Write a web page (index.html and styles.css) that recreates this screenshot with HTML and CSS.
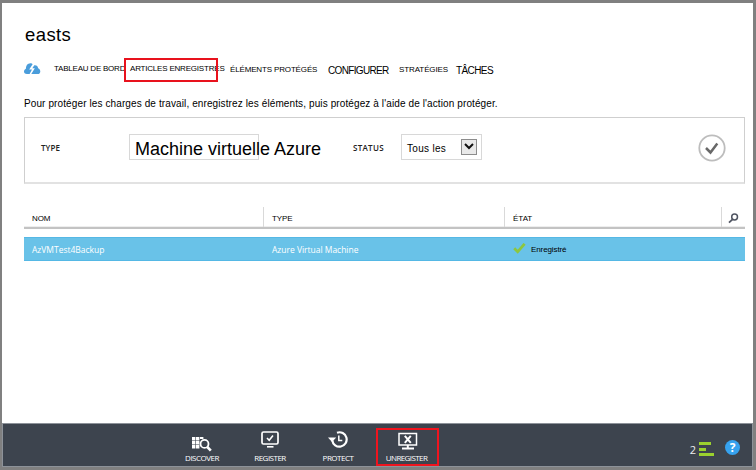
FILE: index.html
```html
<!DOCTYPE html>
<html lang="fr">
<head>
<meta charset="utf-8">
<title>easts</title>
<link rel="stylesheet" href="styles.css">
</head>
<body>
<div class="window">
  <main class="content">
    <h1 class="title">easts</h1>
    <nav class="tabs">
      <svg class="cloud" width="17" height="12" viewBox="0 0 17 12"><path fill="#4a9ddb" d="M3 11C.8 11 0 9.900 0 8.600C0 7.200.7 6.300 1.800 6C1.900 2.600 3.400.4 6.400.3c1.100 0 1.700.3 2.200.9L5.200 6.500H8L5.600 11Z"/><path fill="#4a9ddb" d="M7.300 11L10.800 5.300H8.300L10.300 2.200c2.200-.3 3.600 1 3.800 3C15.500 5.700 16.300 7 16.300 8.400c0 1.600-1.200 2.600-2.600 2.600Z"/></svg>
      <a class="tab t-board">TABLEAU DE BORD</a>
      <a class="tab t-items">ARTICLES ENREGISTRÉS</a>
      <a class="tab t-protected">ÉLÉMENTS PROTÉGÉS</a>
      <a class="tab t-config">CONFIGURER</a>
      <a class="tab t-policies">STRATÉGIES</a>
      <a class="tab t-jobs">TÂCHES</a>
    </nav>
    <p class="intro">Pour protéger les charges de travail, enregistrez les éléments, puis protégez à l'aide de l'action protéger.</p>
    <section class="filters">
      <span class="label l-type">TYPE</span>
      <div class="field f-type"><span class="big">Machine virtuelle Azure</span></div>
      <span class="label l-status">STATUS</span>
      <div class="field f-status"><span class="all">Tous les</span><span class="arrow"><svg width="10" height="7" viewBox="0 0 10 7"><path d="M1 1l4 4 4-4" fill="none" stroke="#111" stroke-width="2"/></svg></span></div>
      <svg class="apply" width="28" height="28" viewBox="0 0 28 28"><circle cx="14" cy="14" r="12.700" fill="#fff" stroke="#bdbdbd" stroke-width="1.800"/><path d="M8 14l4.500 4.500 6.800-8.900" fill="none" stroke="#686868" stroke-width="2.500"/></svg>
    </section>
    <div class="thead">
      <div class="th c1"><span class="h-name">NOM</span></div>
      <div class="th c2"><span class="h-type">TYPE</span></div>
      <div class="th c3"><span class="h-state">ÉTAT</span></div>
      <div class="th c4"><svg width="11" height="11" viewBox="0 0 11 11"><circle cx="6.600" cy="4" r="2.900" fill="none" stroke="#505562" stroke-width="1.500"/><path d="M4.500 6.300L1 9.600" stroke="#505562" stroke-width="1.800"/></svg></div>
    </div>
    <div class="row">
      <div class="td c1"><span class="v-name">AzVMTest4Backup</span></div>
      <div class="td c2"><span class="v-type">Azure Virtual Machine</span></div>
      <div class="td c3"><svg class="ok" width="13" height="11" viewBox="0 0 13 11"><path d="M1.200 5.300l3.500 3.500L11.600.8" fill="none" stroke="#8dc63f" stroke-width="2.800"/></svg><span class="v-state">Enregistré</span></div>
    </div>
  </main>
  <footer class="bar">
    <div class="cmds">
      <div class="cmd k1">
        <svg width="22" height="18" viewBox="0 0 22 18"><path fill="#fff" d="M1 2h3.400v3.400H1zM5 2h3.400v3.400H5zM9 2h3.400v2H9zM1 6h3.400v3.400H1zM5 6h3.400v3.400H5zM1 10h3.400v3.400H1zM5 10h3.400v3.400H5z"/><circle cx="13.500" cy="8.900" r="4" fill="#3d444e" stroke="#fff" stroke-width="1.800"/><path d="M16.300 12l3.500 3.700" stroke="#fff" stroke-width="2.600"/></svg>
        <span class="n1">DISCOVER</span>
      </div>
      <div class="cmd k2">
        <svg width="18" height="18" viewBox="0 0 18 18"><rect x="1" y="1" width="16" height="12" rx="1.500" fill="none" stroke="#fff" stroke-width="1.700"/><path d="M6 7l2.200 2.200L12 4.500" fill="none" stroke="#fff" stroke-width="1.600"/><path d="M6 15.800h6.500" stroke="#fff" stroke-width="1.600"/></svg>
        <span class="n2">REGISTER</span>
      </div>
      <div class="cmd k3">
        <svg width="20" height="18" viewBox="0 0 20 18"><path d="M4.300 9.300A7.200 7.200 0 1 0 9 1.700" fill="none" stroke="#fff" stroke-width="2.200"/><path d="M0 6.500h8.200L4 11z" fill="#fff"/><path d="M10.800 4.500v5h3.500" fill="none" stroke="#fff" stroke-width="1.500"/></svg>
        <span class="n3">PROTECT</span>
      </div>
      <div class="cmd k4">
        <svg width="20" height="18" viewBox="0 0 20 18"><rect x="1" y="1.500" width="17.500" height="11.500" fill="none" stroke="#fff" stroke-width="1.500"/><path d="M6.800 3.800l6 7M12.800 3.800l-6 7" stroke="#fff" stroke-width="2"/><path d="M9.800 13v3M4 16.500h12" stroke="#fff" stroke-width="2"/></svg>
        <span class="n4">UNREGISTER</span>
      </div>
    </div>
    <div class="status">
      <span class="count">2</span>
      <svg width="15" height="15" viewBox="0 0 15 15"><path fill="#9bd12f" d="M0 0h12v3H0zM0 6h7v3H0zM0 11h15v3H0z"/></svg>
      <span class="help">?</span>
    </div>
  </footer>
</div>
</body>
</html>
```
FILE: styles.css
```css
*, *::after { box-sizing: border-box; }
body {
  margin: 0;
  width: 756px;
  height: 470px;
  background: #808080;
  font-family: "Liberation Sans", Arial, sans-serif;
  color: #000;
  overflow: hidden;
  white-space: nowrap;
}
.window {
  width: 751px;
  height: 464px;
  margin: 3px 3px 3px 2px;
  background: #fff;
  display: flex;
  flex-direction: column;
  float: left;
}
.content { flex: 1; padding: 0 8px 0 22px; }
.title {
  margin: 20px 0 0 1px;
  font-size: 18.500px;
  font-weight: 400;
  line-height: 24px;
  letter-spacing: 0.4px;
}
.tabs { display: flex; height: 24px; margin-top: 11px; align-items: flex-start; }
.cloud { margin-top: 5px; flex: none; }
.tab { flex: none; line-height: 12px; font-size: 8px; }
.t-board { margin: 5px 0 0 13px; width: 71px; letter-spacing: -0.22px; }
.t-items {
  width: 94px;
  height: 24px;
  padding: 5px 0 0 5px;
  letter-spacing: -0.2px;
  position: relative;
}
.t-items::after {
  content: "";
  position: absolute;
  left: -1px;
  top: 0;
  width: 94px;
  height: 24px;
  border: 2px solid #e8121d;
}
.t-protected { margin: 6px 0 0 11px; width: 93px; letter-spacing: -0.15px; }
.t-config { margin: 7px 0 0 5px; width: 66px; font-size: 10px; letter-spacing: -0.66px; }
.t-policies { margin: 6px 0 0 5px; width: 52px; letter-spacing: -0.1px; }
.t-jobs { margin: 7px 0 0 5px; font-size: 10px; letter-spacing: -0.6px; }
.intro { margin: 15px 0 0; line-height: 14px; font-size: 10px; letter-spacing: 0.11px; }
.filters {
  width: 721px;
  height: 67px;
  margin-top: 6px;
  border: 1px solid #cfcfcf;
  border-bottom: 2px solid #e2e2e2;
  display: flex;
  align-items: flex-start;
}
.label { font: 600 8px/12px "Open Sans", sans-serif; color: #222; margin-top: 24px; }
.l-type { margin-left: 16px; width: 88px; letter-spacing: 0.1px; }
.l-status { width: 48px; margin-left: 94px; letter-spacing: 0.3px; }
.field {
  height: 26px;
  margin-top: 16px;
  border: 1px solid #d8d8d8;
  display: flex;
  align-items: center;
}
.f-type { width: 130px; padding: 4px 0 0 5px; }
.big { font-size: 18px; line-height: 24px; }
.f-status { width: 81px; padding: 0 4px 0 5px; justify-content: space-between; }
.all { font-size: 10px; padding-top: 3px; letter-spacing: 0.3px; }
.arrow {
  width: 16px;
  height: 16px;
  margin-bottom: 1px;
  border: 1px solid #8c8c8c;
  background: #e9e9e9;
  display: flex;
  align-items: center;
  justify-content: center;
}
.apply { margin: 16px 18px 0 auto; }
.thead {
  display: flex;
  width: 721px;
  height: 22px;
  margin-top: 23px;
  border-bottom: 2px solid #c3c3c3;
  box-shadow: inset 0 -1px #eee;
}
.th { height: 20px; padding-left: 8px; font-size: 8px; line-height: 23px; }
.th + .th { border-left: 1px solid #d9d9d9; }
.c1 { width: 239px; }
.c2 { width: 241px; }
.c3 { width: 217px; }
.c4 { flex: 1; }
.th.c4 { padding: 6px 0 0 6px; line-height: 0; }
.h-name { letter-spacing: -0.1px; }
.h-type { letter-spacing: -0.1px; }
.row {
  display: flex;
  width: 721px;
  height: 24px;
  margin-top: 8px;
  background: #69c2e8;
  border: solid #55b8e5;
  border-width: 1px 0;
}
.td { padding-left: 8px; line-height: 24px; display: flex; font-size: 8.500px; }
.td + .td { padding-left: 9px; }
.v-name, .v-type { font-family: "Open Sans", sans-serif; color: #fff; letter-spacing: -0.02px; }
.ok { margin: 5px 5px 0 0; }
.v-state { font-size: 8px; line-height: 23px; letter-spacing: -0.1px; }
.bar {
  height: 44px;
  background: #3d444e;
  border: 1px solid #8d9299;
  display: flex;
  justify-content: space-between;
}
.cmds { display: flex; margin-left: 165px; }
.cmd {
  width: 68px;
  height: 42px;
  display: flex;
  flex-direction: column;
  align-items: center;
  padding-top: 7px;
  font: 8px/12px "Open Sans", sans-serif;
  color: #fff;
}
.cmd svg { margin-bottom: 3px; flex: none; }
.k1 svg { position: relative; top: 4px; }
.k4 {
  width: 63px;
  height: 38px;
  margin: 4px 0 0 4px;
  padding-top: 2px;
  border: 2px solid #f0141e;
}
.k4 svg { margin-bottom: 2px; }
.n1, .n2, .n3, .n4 { letter-spacing: -0.5px; }
.n4 { margin-right: 2px; letter-spacing: -0.6px; }
.status { display: flex; margin-right: 12px; padding-top: 17px; }
.count { font: 11px/18px "Open Sans", sans-serif; color: #eee; margin-right: 3px; }
.status svg { margin-top: 1px; }
.help {
  width: 15px;
  height: 15px;
  margin: -1px 0 0 11px;
  border-radius: 50%;
  background: #36a2ee;
  color: #fff;
  text-align: center;
  font: 700 12px/15px "Open Sans", sans-serif;
}
```
